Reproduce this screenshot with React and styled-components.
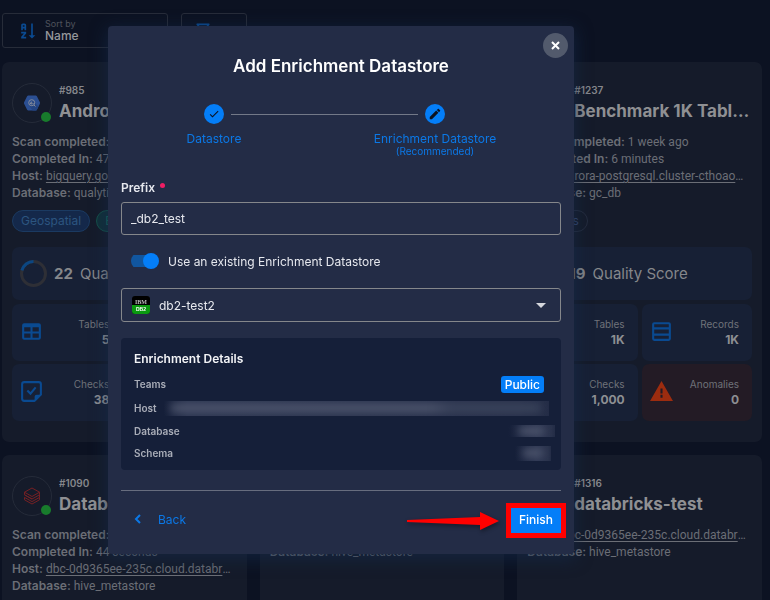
import React from "react";
import styled, { createGlobalStyle } from "styled-components";

const GlobalStyle = createGlobalStyle`
  *, *::before, *::after { box-sizing: border-box; }
  body {
    margin: 0;
    background: #0c1222;
    color: #8d8f95;
    font-family: Inter, "Liberation Sans", sans-serif;
  }
  h1, h2, h3, p, ol, ul, dl, dd { margin: 0; padding: 0; }
  ol, ul { list-style: none; }
  button, input, select { font: inherit; color: inherit; }
`;

const Page = styled.div`
  height: 100vh;
  overflow: hidden;
`;

const Catalog = styled.main`
  padding: 13px 8px 0 2px;
`;

const Toolbar = styled.div`
  display: flex;
  gap: 13px;
  margin-bottom: 14px;
`;

const ToolButton = styled.button`
  display: flex;
  align-items: center;
  gap: 8px;
  width: ${(p) => (p.$wide ? 166 : 66)}px;
  height: 35px;
  padding: 0 ${(p) => (p.$wide ? 14 : 11)}px;
  border: 1px solid #272c39;
  border-radius: 3px;
  background: transparent;
  text-align: left;
`;

const SortText = styled.span`
  display: flex;
  flex-direction: column;
  font-size: 12px;
  line-height: 14px;
  font-weight: 500;
  color: #96989c;
`;

const SortHint = styled.small`
  font-size: 9px;
  line-height: 11px;
  font-weight: 400;
  color: #4f535c;
`;

const Grid = styled.section`
  display: grid;
  grid-template-columns: repeat(3, minmax(0, 1fr));
  gap: 13px;
`;

const Card = styled.article`
  min-height: 380px;
  padding: 20px 10px;
  border-radius: 7px;
  background: #151b2a;
`;

const CardHead = styled.header`
  display: flex;
  align-items: center;
  gap: 7px;
  margin-bottom: 9px;
`;

const Logo = styled.div`
  position: relative;
  flex: none;
  display: grid;
  place-items: center;
  width: 40px;
  height: 40px;
  border: 1px solid #252b39;
  border-radius: 50%;
`;

const StatusDot = styled.span`
  position: absolute;
  right: 0;
  bottom: 0;
  width: 10px;
  height: 10px;
  border-radius: 50%;
  background: #187c2c;
`;

const CardTitle = styled.div`
  min-width: 0;
  height: 42px;
`;

const CardId = styled.p`
  font-size: 10px;
  line-height: 17px;
  font-weight: 600;
  color: #85878c;
`;

const CardName = styled.h2`
  overflow: hidden;
  text-overflow: ellipsis;
  white-space: nowrap;
  font-size: 17px;
  line-height: 24px;
  font-weight: 700;
  color: #8f9093;
`;

const Facts = styled.div`
  margin-right: 4px;
  font-family: Roboto, "Liberation Sans", sans-serif;
  font-size: 12px;
  line-height: 17px;
  color: #6b6e76;
`;

const Fact = styled.p`
  overflow: hidden;
  height: 17px;
  text-overflow: ellipsis;
  white-space: nowrap;
`;

const FactLabel = styled.b`
  font-family: Inter, "Liberation Sans", sans-serif;
  font-weight: 600;
`;

const HostLink = styled.a`
  color: inherit;
  text-underline-offset: 2px;
`;

const Tags = styled.ul`
  display: flex;
  gap: 6px;
  margin: 9px 0 15px;
`;

const tagTones = {
  blue: "color:#2c5580;background:#14284a;border-color:#1b3a61;",
  green: "color:#14665c;background:#11303a;border-color:#155049;",
  plain: "color:#35466e;background:transparent;border-color:#252c3e;",
};

const Tag = styled.li`
  height: 22px;
  padding: 0 8px;
  border: 1px solid;
  border-radius: 11px;
  font-size: 12px;
  line-height: 20px;
  ${(p) => tagTones[p.$tone]}
`;

const Score = styled.div`
  display: flex;
  align-items: center;
  gap: 7px;
  height: 53px;
  margin-bottom: 4px;
  padding: 0 8px;
  border-radius: 7px;
  background: #172035;
  font-size: 15px;
  color: #85878b;
`;

const Tiles = styled.div`
  display: grid;
  grid-template-columns: repeat(2, minmax(0, 1fr));
  gap: 3px 4px;
`;

const Tile = styled.div`
  display: flex;
  align-items: center;
  justify-content: space-between;
  height: 57px;
  padding: 0 13px 2px 7px;
  border-radius: 7px;
  background: ${(p) => (p.$alert ? "#231b25" : "#172035")};
  text-align: right;
  font-size: 10px;
  line-height: 15px;
  color: #6f7279;
`;

const TileValue = styled.strong`
  display: block;
  font-size: 12px;
  color: #8d8f93;
`;

const Overlay = styled.div`
  position: fixed;
  inset: 0;
  display: flex;
  align-items: flex-start;
  padding: 26px 196px 0 108px;
`;

const Dialog = styled.form`
  position: relative;
  flex: 1;
  min-width: 0;
  padding: 28px 13px 21px;
  border-radius: 4px;
  background: #232c46;
  box-shadow: 0 4px 16px 2px #142a4a99;
  color: #e6e8ee;
  font-size: 12px;
`;

const CloseButton = styled.button`
  position: absolute;
  top: 7px;
  right: 6px;
  display: grid;
  place-items: center;
  width: 25px;
  height: 25px;
  padding: 0;
  border: 0;
  border-radius: 50%;
  background: #525a6c;
  color: #fff;
`;

const DialogTitle = styled.h1`
  margin-bottom: 26px;
  font-size: 17px;
  line-height: 24px;
  font-weight: 600;
  text-align: center;
  color: #fff;
`;

const Stepper = styled.ol`
  display: flex;
  justify-content: space-between;
  margin-bottom: 23px;
  padding: 0 66px 0 33px;
`;

const Step = styled.li`
  display: flex;
  flex-direction: column;
  align-items: center;
  width: 120px;
  font-size: 12px;
  line-height: 14px;
  white-space: nowrap;
  color: #0b78e6;
`;

const StepLine = styled.li`
  flex: 1;
  height: 1px;
  margin: 10px -43px 0;
  background: #737988;
`;

const StepMark = styled.span`
  display: grid;
  place-items: center;
  width: 20px;
  height: 20px;
  margin-bottom: 8px;
  border-radius: 50%;
  background: #047ef8;
  color: #0c1222;
`;

const StepNote = styled.small`
  font-size: 10px;
  line-height: 11px;
`;

const FieldLabel = styled.label`
  display: flex;
  align-items: center;
  gap: 5px;
  margin-bottom: 6px;
  line-height: 16px;
  font-weight: 600;
`;

const RequiredDot = styled.span`
  width: 5px;
  height: 5px;
  margin-bottom: 6px;
  border-radius: 50%;
  background: #f01d64;
`;

const TextInput = styled.input`
  display: block;
  width: 100%;
  height: 33px;
  padding: 0 9px;
  border: 1px solid #85878b;
  border-radius: 3px;
  background: transparent;
  outline: 0;
`;

const SwitchRow = styled.label`
  display: flex;
  align-items: center;
  gap: 9px;
  height: 16px;
  margin: 18px 0 19px 10px;
`;

const Switch = styled.input`
  appearance: none;
  display: flex;
  align-items: center;
  justify-content: flex-end;
  width: 28px;
  height: 16px;
  margin: 0;
  background: linear-gradient(#11569f, #11569f) 0 2px / 25px 12px no-repeat;
  border-radius: 8px;
  &::before {
    content: "";
    width: 16px;
    height: 16px;
    border-radius: 50%;
    background: #047ef8;
  }
`;

const SelectBox = styled.div`
  position: relative;
  margin-bottom: 16px;
`;

const Select = styled.select`
  appearance: none;
  display: block;
  width: 100%;
  height: 34px;
  padding: 0 36px 0 37px;
  border: 1px solid #85878b;
  border-radius: 3px;
  background: transparent;
  outline: 0;
`;

const SelectIcon = styled.svg`
  position: absolute;
  top: 8px;
  ${(p) => (p.$end ? "right: 11px;" : "left: 11px;")}
  pointer-events: none;
`;

const Details = styled.section`
  margin-bottom: 20px;
  padding: 12px 13px 6px;
  border-radius: 4px;
  background: #151f39;
`;

const DetailsTitle = styled.h2`
  margin-bottom: 4px;
  font-size: 12px;
  line-height: 18px;
  font-weight: 600;
  color: #f2f3f6;
`;

const DetailRow = styled.div`
  display: flex;
  align-items: center;
  justify-content: space-between;
  gap: 7px;
  height: ${(p) => (p.$tall ? 24 : 22)}px;
  font-size: 10px;
  font-weight: 600;
  color: #a9adb8;
`;

const Badge = styled.span`
  display: block;
  padding: 0 4px;
  margin-right: 4px;
  border-radius: 3px;
  background: #047ef8;
  color: #fff;
  font-size: 12px;
  line-height: 17px;
  font-weight: 500;
`;

const LongDetail = styled.dd`
  flex: 1;
`;

const Redacted = styled.div`
  overflow: hidden;
  display: flex;
  justify-content: center;
  align-items: center;
  width: ${(p) => (p.$width ? `${p.$width}px` : "auto")};
  height: ${(p) => p.$height}px;
  margin-right: ${(p) => p.$shift}px;
  background: linear-gradient(90deg, #151f39, #2b3450 ${(p) => (p.$width ? "60%" : "6%")}, #29324c 92%, #232c46);
  &::before {
    content: "";
    width: ${(p) => (p.$width ? "55%" : "96%")};
    height: 8px;
    background: linear-gradient(90deg, #50586f ${(p) => (p.$width ? "100%" : "70%")}, #3c455d 76%);
    filter: blur(4px);
  }
`;

const Footer = styled.footer`
  display: flex;
  align-items: center;
  padding-top: 17px;
  border-top: 1px solid #676d7e;
`;

const BackButton = styled.button`
  display: flex;
  align-items: center;
  gap: 13px;
  margin-right: auto;
  padding: 0 10px 3px;
  border: 0;
  background: none;
  color: #0b78e6;
`;

const FinishButton = styled.button`
  width: 50px;
  height: 25px;
  margin-left: 12px;
  padding: 0 0 3px;
  border: 0;
  outline: 5px solid #f00;
  background: #047ef8;
  color: #fff;
  font-weight: 500;
`;

const Arrow = styled.svg`
  flex: none;
  filter: drop-shadow(1px 2px 2px #0006);
`;

const icons = {
  sort: "M19 17H22L18 21L14 17H17V3H19M11 13V15L7.67 19H11V21H5V19L8.33 15H5V13M9 3H7C5.9 3 5 3.9 5 5V11H7V9H9V11H11V5C11 3.9 10.11 3 9 3M9 7H7V5H9Z",
  filter: "M15 19.88C15.04 20.18 14.94 20.5 14.71 20.71C14.32 21.1 13.69 21.1 13.3 20.71L9.29 16.7C9.06 16.47 8.96 16.16 9 15.87V10.75L4.21 4.62C3.87 4.19 3.95 3.56 4.38 3.22C4.57 3.08 4.78 3 5 3H19C19.22 3 19.43 3.08 19.62 3.22C20.05 3.56 20.13 4.19 19.79 4.62L15 10.75V19.88M7.04 5L11 10.06V15.58L13 17.58V10.05L16.96 5H7.04Z",
  table: "M5 4H19A2 2 0 0 1 21 6V18A2 2 0 0 1 19 20H5A2 2 0 0 1 3 18V6A2 2 0 0 1 5 4M5 8V12H11V8H5M13 8V12H19V8H13M5 14V18H11V14H5M13 14V18H19V14H13Z",
  alert: "M13 14H11V9H13M13 18H11V15H13M1 21H23L12 2L1 21Z",
  pencil: "M20.71 7.04C21.1 6.65 21.1 6 20.71 5.63L18.37 3.29C18 2.9 17.35 2.9 16.96 3.29L15.12 5.12L18.87 8.87M3 17.25V21H6.75L17.81 9.93L14.06 6.18L3 17.25Z",
  check: "M21 7L9 19L3.5 13.5L4.91 12.09L9 16.17L19.59 5.59L21 7Z",
  records: "M5 3H19A2 2 0 0 1 21 5V19A2 2 0 0 1 19 21H5A2 2 0 0 1 3 19V5A2 2 0 0 1 5 3M5 5V8H19V5H5M5 10V14H19V10H5M5 16V19H19V16H5Z",
};

const Icon = ({ name, size, color = "currentColor" }) => (
  <svg width={size} height={size} viewBox="0 0 24 24" fill={color} aria-hidden="true">
    <path d={icons[name]} />
  </svg>
);

const NoteCheck = () => (
  <svg width="25" height="25" viewBox="0 0 24 24" fill="none" stroke="#0a4a91" strokeWidth="2" aria-hidden="true">
    <path d="M15 21H5a2 2 0 0 1-2-2V5a2 2 0 0 1 2-2h14a2 2 0 0 1 2 2v10Z" strokeLinejoin="round" />
    <path d="M15 21v-4a2 2 0 0 1 2-2h4Z" fill="#0a4a91" stroke="none" />
    <path d="m8 11 3 3 5-6" />
  </svg>
);

const BigQueryLogo = () => (
  <svg width="18" height="18" viewBox="0 0 18 18" aria-hidden="true">
    <path d="M5.3 1.5h7.4c.5 0 .9.3 1.2.7l3 6c.2.5.2 1 0 1.5l-3 6c-.3.5-.7.8-1.2.8H5.3c-.5 0-.9-.3-1.2-.8l-3-6a1.700 1.700 0 0 1 0-1.500l3-6c.3-.4.7-.7 1.200-.7Z" fill="#2b4f93" />
    <path d="m9 6 6.500 6.500-2 4H9.500L6.500 12Z" fill="#234482" />
    <circle cx="8.700" cy="8.700" r="3" fill="none" stroke="#838b9c" />
    <path d="m11 11 1.500 1.500M7.500 8.500v1.500M8.700 7.500v3M10 9v1" stroke="#838b9c" />
  </svg>
);

const DatabricksLogo = () => (
  <svg width="18" height="18" viewBox="0 0 18 18" fill="none" stroke="#752024" aria-hidden="true">
    <path d="M1.500 5.200 9 1l7.500 4.200L9 9.500 1.500 5.200v2.600L9 12l7.500-4.200V10.400L9 14.600l-7.500-4.200v2.400L9 17l7.500-4.200v-2.400M1.500 7.800 9 12M16.500 5.200v2.600" />
  </svg>
);

const Ring = () => (
  <svg width="27" height="27" viewBox="0 0 27 27" fill="none" strokeWidth="3" aria-hidden="true">
    <circle cx="13.500" cy="13.500" r="12" stroke="#2e2f36" />
    <path d="M1.900 10.400A12 12 0 0 1 13.500 1.500" stroke="#0b4682" />
  </svg>
);

const Metric = ({ label, value, icon, alert }) => (
  <Tile $alert={alert}>
    {icon}
    <div>
      {label}
      <TileValue>{value}</TileValue>
    </div>
  </Tile>
);

const cards = [
  {
    id: "#985", name: "Android Releases", logo: "bigquery", scan: "1 week ago", took: "47 seconds",
    host: "bigquery.googleapis.com", db: "qualytics-dev",
    tags: [["Geospatial", "blue"], ["BigQuery", "green"]], score: 22, tables: "5", records: "1K", checks: "38", anomalies: "0",
  },
  {
    id: "#1236", name: "Bank Dataset", logo: "databricks", scan: "1 week ago", took: "5 minutes",
    host: "dbc-0d9365ee-235c.cloud.databricks.com", db: "hive_metastore",
    tags: [["Finance", "plain"]], score: 20, tables: "12", records: "1K", checks: "40", anomalies: "0",
  },
  {
    id: "#1237", name: "Benchmark 1K Tables Dataset", logo: "bigquery", scan: "1 week ago", took: "6 minutes",
    host: "aurora-postgresql.cluster-cthoaoxyz.amazonaws.com", db: "gc_db",
    tags: [["Metrics", "plain"]], score: 19, tables: "1K", records: "1K", checks: "1,000", anomalies: "0",
  },
  {
    id: "#1090", name: "Databricks DLT", logo: "databricks", scan: "1 week ago", took: "44 seconds",
    host: "dbc-0d9365ee-235c.cloud.databricks.com", db: "hive_metastore",
  },
  { id: "#1315", name: "databricks", logo: "databricks", host: "dbc-0d9365ee-235c.cloud.databricks.com", db: "hive_metastore" },
  { id: "#1316", name: "databricks-test", logo: "databricks", host: "dbc-0d9365ee-235c.cloud.databricks.com", db: "hive_metastore" },
];

const DatastoreCard = ({ data }) => (
  <Card>
    <CardHead>
      <Logo>
        {data.logo === "bigquery" ? <BigQueryLogo /> : <DatabricksLogo />}
        <StatusDot />
      </Logo>
      <CardTitle>
        <CardId>{data.id}</CardId>
        <CardName>{data.name}</CardName>
      </CardTitle>
    </CardHead>
    <Facts>
      {data.scan && <Fact><FactLabel>Scan completed:</FactLabel> {data.scan}</Fact>}
      {data.took && <Fact><FactLabel>Completed In:</FactLabel> {data.took}</Fact>}
      <Fact><FactLabel>Host:</FactLabel> <HostLink href="#host">{data.host}</HostLink></Fact>
      <Fact><FactLabel>Database:</FactLabel> {data.db}</Fact>
    </Facts>
    {data.tags && (
      <>
        <Tags>{data.tags.map(([text, tone]) => <Tag key={text} $tone={tone}>{text}</Tag>)}</Tags>
        <Score><Ring /><b>{data.score}</b> Quality Score</Score>
        <Tiles>
          <Metric label="Tables" value={data.tables} icon={<Icon name="table" size={25} color="#0a4a91" />} />
          <Metric label="Records" value={data.records} icon={<Icon name="records" size={25} color="#0a4a91" />} />
          <Metric label="Checks" value={data.checks} icon={<NoteCheck />} />
          <Metric alert label="Anomalies" value={data.anomalies} icon={<Icon name="alert" size={25} color="#9c2c0f" />} />
        </Tiles>
      </>
    )}
  </Card>
);

const EnrichmentDialog = () => (
  <Dialog role="dialog" aria-labelledby="dialog-title" onSubmit={(e) => e.preventDefault()}>
    <CloseButton type="button" aria-label="Close">
      <svg width="9" height="9" viewBox="0 0 9 9" fill="none" stroke="currentColor" strokeWidth="2" aria-hidden="true">
        <path d="m1 1 7 7M8 1 1 8" />
      </svg>
    </CloseButton>
    <DialogTitle id="dialog-title">Add Enrichment Datastore</DialogTitle>
    <Stepper>
      <Step><StepMark><Icon name="check" size={12} /></StepMark>Datastore</Step>
      <StepLine aria-hidden="true" />
      <Step>
        <StepMark><Icon name="pencil" size={14} /></StepMark>
        Enrichment Datastore
        <StepNote>(Recommended)</StepNote>
      </Step>
    </Stepper>
    <FieldLabel htmlFor="prefix">Prefix <RequiredDot /></FieldLabel>
    <TextInput id="prefix" type="text" defaultValue="_db2_test" />
    <SwitchRow>
      <Switch type="checkbox" role="switch" defaultChecked />
      Use an existing Enrichment Datastore
    </SwitchRow>
    <SelectBox>
      <Select aria-label="Enrichment datastore" defaultValue="db2-test2">
        <option value="db2-test2">db2-test2</option>
      </Select>
      <SelectIcon width="18" height="18" viewBox="0 0 18 18" aria-hidden="true">
        <rect width="18" height="18" rx="3" fill="#000" />
        <path d="M0 9h18v6a3 3 0 0 1-3 3H3a3 3 0 0 1-3-3Z" fill="#0a9a10" />
        <text x="9" y="7.500" textAnchor="middle" fontSize="6" fontFamily="Liberation Serif, serif" fontWeight="700" fill="#bbb">IBM</text>
        <text x="9" y="15" textAnchor="middle" fontSize="5" fontFamily="Liberation Sans, sans-serif" fontWeight="700" fill="#fff">DB2</text>
      </SelectIcon>
      <SelectIcon $end width="18" height="18" viewBox="0 0 18 18" aria-hidden="true">
        <path d="M4 7h10l-5 5Z" fill="#d5d7dd" />
      </SelectIcon>
    </SelectBox>
    <Details>
      <DetailsTitle>Enrichment Details</DetailsTitle>
      <dl>
        <DetailRow $tall><dt>Teams</dt><dd><Badge>Public</Badge></dd></DetailRow>
        <DetailRow $tall><dt>Host</dt><LongDetail><Redacted $height={15} $shift={-1} /></LongDetail></DetailRow>
        <DetailRow><dt>Database</dt><dd><Redacted $width={47} $height={12} $shift={-7} /></dd></DetailRow>
        <DetailRow><dt>Schema</dt><dd><Redacted $width={36} $height={15} $shift={-3} /></dd></DetailRow>
      </dl>
    </Details>
    <Footer>
      <BackButton type="button">
        <svg width="14" height="14" viewBox="0 0 14 14" fill="none" stroke="currentColor" strokeWidth="2" aria-hidden="true">
          <path d="M9 3 5 7l4 4" />
        </svg>
        Back
      </BackButton>
      <Arrow width="92" height="20" viewBox="0 0 92 20" fill="#f00" aria-hidden="true">
        <path d="M0 9 73 6V1L92 10 73 19V14L0 11Z" />
      </Arrow>
      <FinishButton type="submit">Finish</FinishButton>
    </Footer>
  </Dialog>
);

export default function App() {
  return (
    <Page>
      <GlobalStyle />
      <Catalog>
        <Toolbar>
          <ToolButton $wide type="button">
            <Icon name="sort" size={20} color="#0a4a91" />
            <SortText><SortHint>Sort by</SortHint>Name</SortText>
          </ToolButton>
          <ToolButton type="button" aria-label="Filter">
            <Icon name="filter" size={20} color="#0a4a91" />
          </ToolButton>
        </Toolbar>
        <Grid>{cards.map((c) => <DatastoreCard key={c.id} data={c} />)}</Grid>
      </Catalog>
      <Overlay><EnrichmentDialog /></Overlay>
    </Page>
  );
}
